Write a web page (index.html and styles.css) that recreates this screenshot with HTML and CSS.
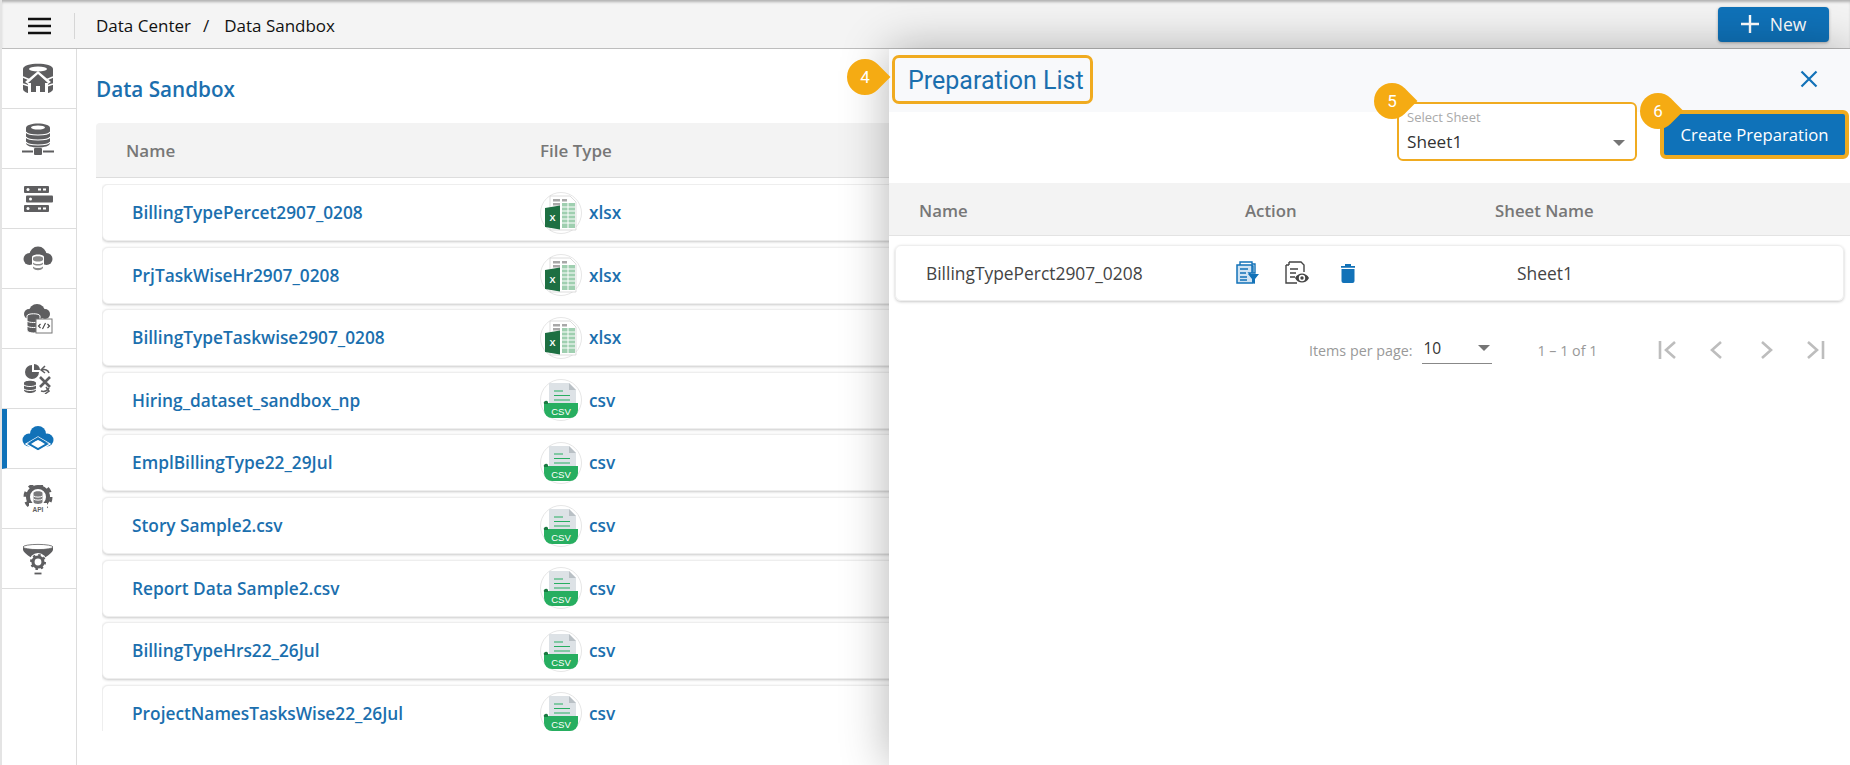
FILE: index.html
```html
<!DOCTYPE html>
<html lang="en">
<head>
<meta charset="utf-8">
<title>Data Sandbox</title>
<link rel="stylesheet" href="styles.css">
</head>
<body>
<svg class="defs" width="0" height="0" aria-hidden="true">
  <symbol id="xlsx" viewBox="0 0 42 42">
    <circle cx="21" cy="21" r="20.5" fill="#fff" stroke="#e6e6e6"/>
    <path d="M10 4h20l6 6v28H10z" fill="#fff" stroke="#cfcfcf" stroke-width=".7"/>
    <path d="M13 7h7v2.5h-7zM13 11h7v2.5h-7zM22 7h5v2.5h-5z" fill="#a8a8a8"/>
    <path d="M22 11h13v25H22z" fill="#9fcfb0"/>
    <path d="M22 15h13M22 19h13M22 23h13M22 27h13M22 31h13M28 11v25" stroke="#fff" stroke-width="1"/>
    <path d="M5 16l15-2.500v24L5 35z" fill="#1d6f42"/>
  </symbol>
  <symbol id="csv" viewBox="0 0 42 42">
    <circle cx="21" cy="21" r="20.500" fill="#fff" stroke="#e6e6e6"/>
    <path d="M9 4h20l7 7v16H9z" fill="#dde2e6"/>
    <path d="M29 4l7 7h-7z" fill="#b9c0c5"/>
    <path d="M14 12h9M14 16.500h16M14 21h16" stroke="#27ae60" stroke-width="1.200"/>
    <path d="M4 24h34v7a8 8 0 0 1-8 8H12a8 8 0 0 1-8-8z" fill="#27ae60"/>
    <path d="M4 25a2 2 0 0 1 4-2v2z" fill="#1a7a42"/>
  </symbol>
</svg>

<div class="app">
  <header class="topbar">
    <button class="menu" aria-label="Menu">
      <svg width="24" height="18" viewBox="0 0 24 18"><path d="M0 2h23M0 9h23M0 16h23" stroke="#111" stroke-width="2.400"/></svg>
    </button>
    <nav class="crumbs"><span>Data Center</span><span class="sep">/</span><span>Data Sandbox</span></nav>
    <button class="new-btn">
      <svg width="18" height="18" viewBox="0 0 18 18"><path d="M9 0v18M0 9h18" stroke="#fff" stroke-width="2.400"/></svg>
      <span>New</span>
    </button>
  </header>

  <div class="body">
    <aside class="sidebar">
      <div class="side-item">
        <svg width="32" height="32" viewBox="0 0 32 32">
          <path d="M1 6c0-7 30-7 30 0v20c0 7-30 7-30 0z" fill="#5e5e60"/>
          <ellipse cx="16" cy="6" rx="9" ry="2.400" fill="#fff"/>
          <path d="M1 14l7 3M31 14l-7 3M1 21l6 2M31 21l-6 2" stroke="#fff" stroke-width="1.400"/>
          <path d="M16 8L3 19l3 2v11h20V21l3-2z" fill="#fff"/>
          <path d="M16 11L6 20h3v9h5v-6h4v6h5v-9h3z" fill="#5e5e60"/>
        </svg>
      </div>
      <div class="side-item">
        <svg width="32" height="32" viewBox="0 0 32 32">
          <path d="M4 5c0-6 24-6 24 0v15c0 6-24 6-24 0z" fill="#5e5e60"/>
          <ellipse cx="16" cy="4.500" rx="7" ry="2" fill="#fff"/>
          <path d="M4 9c2 4 22 4 24 0M4 14c2 4 22 4 24 0M4 19c2 4 22 4 24 0" fill="none" stroke="#fff" stroke-width="1.200"/>
          <path d="M0 28.500h11M21 28.500h11" stroke="#5e5e60" stroke-width="2"/>
          <rect x="12" y="25" width="8" height="7" rx="1" fill="#5e5e60"/>
        </svg>
      </div>
      <div class="side-item">
        <svg width="30" height="28" viewBox="0 0 30 28">
          <rect x="1" y="1" width="25" height="7" rx="1" fill="#5e5e60"/>
          <rect x="3" y="10.500" width="27" height="7" rx="1" fill="#5e5e60"/>
          <rect x="1" y="20" width="25" height="7" rx="1" fill="#5e5e60"/>
          <circle cx="5" cy="4.500" r="1.500" fill="#fff"/><circle cx="7.500" cy="14" r="1.500" fill="#fff"/><circle cx="5" cy="23.500" r="1.500" fill="#fff"/>
          <path d="M15 3.500h3v2h-3zM20 3.500h3v2h-3zM15 22.500h3v2h-3zM20 22.500h3v2h-3z" fill="#fff"/>
        </svg>
      </div>
      <div class="side-item">
        <svg width="30" height="26" viewBox="0 0 30 26">
          <circle cx="15" cy="9" r="8.500" fill="#5e5e60"/>
          <circle cx="6.500" cy="13" r="6" fill="#5e5e60"/>
          <circle cx="23.500" cy="13" r="6" fill="#5e5e60"/>
          <path d="M9 11c0-3.500 12-3.500 12 0v11c0 4.500-12 4.500-12 0z" fill="#fff"/>
          <path d="M10 12c0-2.500 10-2.500 10 0v2c-2 2-8 2-10 0zM10 16.500c2 2 8 2 10 0v1.500c-2 2-8 2-10 0zM10 20.500c2 2 8 2 10 0v1.500c-2 3-8 3-10 0z" fill="#8a8a8a"/>
        </svg>
      </div>
      <div class="side-item">
        <svg width="30" height="32" viewBox="0 0 30 32">
          <circle cx="14" cy="9" r="8" fill="#5e5e60"/>
          <circle cx="6" cy="11" r="5" fill="#5e5e60"/>
          <circle cx="22" cy="11" r="5" fill="#5e5e60"/>
          <path d="M4 13c0-3 13-3 13 0v14c0 4-13 4-13 0z" fill="#5e5e60" stroke="#fff"/>
          <path d="M4 18c2 2 11 2 13 0M4 23c2 2 11 2 13 0" stroke="#fff" fill="none"/>
          <rect x="13" y="16" width="16" height="14" fill="#fff" stroke="#777" stroke-width="1"/>
          <path d="M17.500 21l-2 2 2 2M24.500 21l2 2-2 2M22.500 20l-3 6" stroke="#444" fill="none" stroke-width="1.100"/>
        </svg>
      </div>
      <div class="side-item">
        <svg width="30" height="30" viewBox="0 0 30 30">
          <path d="M9 1a7 7 0 1 0 7 7H9z" fill="#5e5e60"/>
          <path d="M11 0a6 6 0 0 1 6 6h-6z" fill="#5e5e60"/>
          <path d="M1 19c0-3 12-3 12 0v7c0 4-12 4-12 0z" fill="#5e5e60"/>
          <path d="M1 21c2 2 10 2 12 0M1 25c2 2 10 2 12 0" stroke="#fff" fill="none"/>
          <path d="M17 13l10 10M27 13L17 23" stroke="#5e5e60" stroke-width="2.600"/>
          <path d="M26 9c-1-3-4-4-7-3M22 2l-4 4 4 3M18 27c3 1 6 0 8-3M22 30l4-3-3-4" stroke="#5e5e60" fill="none" stroke-width="1.500"/>
        </svg>
      </div>
      <div class="side-item active">
        <svg width="32" height="26" viewBox="0 0 32 26">
          <circle cx="16" cy="8" r="8" fill="#1272b8"/>
          <circle cx="7" cy="14" r="6.500" fill="#1272b8"/>
          <circle cx="25" cy="14" r="6.500" fill="#1272b8"/>
          <path d="M16 11L4 18l12 7 12-7z" fill="#1272b8" stroke="#fff" stroke-width="1.300"/>
          <path d="M16 13.500L9 18l7 4 7-4z" fill="#fff"/>
          <path d="M16 11L5 17.500l11-3.500 11 3.500z" fill="#1272b8"/>
        </svg>
      </div>
      <div class="side-item">
        <svg width="32" height="28" viewBox="0 0 32 28">
          <circle cx="16" cy="12" r="10" fill="none" stroke="#5e5e60" stroke-width="4"/>
          <circle cx="16" cy="12" r="13" fill="none" stroke="#5e5e60" stroke-width="3" stroke-dasharray="5 5.200"/>
          <rect x="7" y="18" width="18" height="10" fill="#fff"/>
          <path d="M11.500 8c0-2.500 9-2.500 9 0v9c0 2.500-9 2.500-9 0z" fill="#7a7a7c"/>
          <path d="M11.500 11c2 1.500 7 1.500 9 0M11.500 14c2 1.500 7 1.500 9 0" stroke="#fff" fill="none"/>
          <text x="16" y="27" class="api">API</text>
        </svg>
      </div>
      <div class="side-item">
        <svg width="32" height="32" viewBox="0 0 32 32">
          <path d="M1 4v3c2 5 8 6 10 10h10c2-4 8-5 10-10V4z" fill="#5e5e60"/>
          <ellipse cx="16" cy="4" rx="15" ry="2.600" fill="#fff" stroke="#5e5e60" stroke-width=".8"/>
          <circle cx="16" cy="19" r="9" fill="#fff"/>
          <circle cx="16" cy="19" r="5" fill="none" stroke="#5e5e60" stroke-width="3.200"/>
          <circle cx="16" cy="19" r="7" fill="none" stroke="#5e5e60" stroke-width="2" stroke-dasharray="2.500 3"/>
          <path d="M12.500 30.500h7" stroke="#5e5e60" stroke-width="1.800"/>
        </svg>
      </div>
    </aside>

    <main class="main">
      <h1 class="page-title">Data Sandbox</h1>
      <div class="table-head"><span class="col-name">Name</span><span>File Type</span></div>
      <div class="rows">
        <div class="row"><span class="col-name">BillingTypePercet2907_0208</span><span class="type"><svg class="file" viewBox="0 0 42 42"><use href="#xlsx"/><text x="12.500" y="29" class="xl">X</text></svg>xlsx</span></div>
        <div class="row"><span class="col-name">PrjTaskWiseHr2907_0208</span><span class="type"><svg class="file" viewBox="0 0 42 42"><use href="#xlsx"/><text x="12.500" y="29" class="xl">X</text></svg>xlsx</span></div>
        <div class="row"><span class="col-name">BillingTypeTaskwise2907_0208</span><span class="type"><svg class="file" viewBox="0 0 42 42"><use href="#xlsx"/><text x="12.500" y="29" class="xl">X</text></svg>xlsx</span></div>
        <div class="row"><span class="col-name">Hiring_dataset_sandbox_np</span><span class="type"><svg class="file" viewBox="0 0 42 42"><use href="#csv"/><text x="21" y="36" class="cs">CSV</text></svg>csv</span></div>
        <div class="row"><span class="col-name">EmplBillingType22_29Jul</span><span class="type"><svg class="file" viewBox="0 0 42 42"><use href="#csv"/><text x="21" y="36" class="cs">CSV</text></svg>csv</span></div>
        <div class="row"><span class="col-name">Story Sample2.csv</span><span class="type"><svg class="file" viewBox="0 0 42 42"><use href="#csv"/><text x="21" y="36" class="cs">CSV</text></svg>csv</span></div>
        <div class="row"><span class="col-name">Report Data Sample2.csv</span><span class="type"><svg class="file" viewBox="0 0 42 42"><use href="#csv"/><text x="21" y="36" class="cs">CSV</text></svg>csv</span></div>
        <div class="row"><span class="col-name">BillingTypeHrs22_26Jul</span><span class="type"><svg class="file" viewBox="0 0 42 42"><use href="#csv"/><text x="21" y="36" class="cs">CSV</text></svg>csv</span></div>
        <div class="row"><span class="col-name">ProjectNamesTasksWise22_26Jul</span><span class="type"><svg class="file" viewBox="0 0 42 42"><use href="#csv"/><text x="21" y="36" class="cs">CSV</text></svg>csv</span></div>
      </div>
    </main>
  </div>

  <section class="drawer">
    <div class="drawer-head">
      <h2 class="drawer-title">Preparation List<span class="badge badge-4"><b>4</b></span></h2>
      <button class="close" aria-label="Close">
        <svg width="18" height="18" viewBox="0 0 18 18"><path d="M1.500 1.500l15 15M16.500 1.500l-15 15" stroke="#1272b8" stroke-width="2.200"/></svg>
      </button>
    </div>
    <div class="toolbar">
      <div class="select">
        <span class="badge badge-5"><b>5</b></span>
        <span class="select-label">Select Sheet</span>
        <span class="select-value">Sheet1<i class="caret"></i></span>
      </div>
      <button class="create">Create Preparation<span class="badge badge-6"><b>6</b></span></button>
    </div>
    <div class="d-head d-grid"><span>Name</span><span>Action</span><span>Sheet Name</span></div>
    <div class="d-row d-grid">
      <span>BillingTypePerct2907_0208</span>
      <span class="actions">
        <svg width="24" height="24" viewBox="0 0 24 24">
          <path d="M5 1h12v2h3v9h-2V5H5z" fill="#fff" stroke="#1272b8" stroke-width="1.400"/>
          <path d="M2 4h15v8h-3l4 5v5H2z" fill="#cfe3f3" stroke="#1272b8" stroke-width="1.500"/>
          <path d="M5 8h8M5 12h6M5 16h7M5 19h7" stroke="#1272b8" stroke-width="1.500"/>
          <path d="M13 13h11l-4 5v5l-3-2v-3z" fill="#1272b8"/>
        </svg>
        <svg width="26" height="24" viewBox="0 0 26 24">
          <path d="M5 1h12l3 3v7M2 4v18h11" fill="none" stroke="#444" stroke-width="1.400"/>
          <path d="M2 4h3M5 1v3" stroke="#444" stroke-width="1.400"/>
          <path d="M6 8h8M6 12h6M6 16h5" stroke="#444" stroke-width="1.500"/>
          <path d="M11 17c3-6 11-6 14 0-3 6-11 6-14 0z" fill="#444"/>
          <circle cx="18" cy="17" r="3.200" fill="#fff"/><circle cx="18" cy="17" r="1.700" fill="#444"/>
        </svg>
        <svg width="16" height="20" viewBox="0 0 16 20">
          <path d="M1 3h14v1.800H1zM5 1h6v2H5z" fill="#1272b8"/>
          <path d="M1.500 6h13v12a2 2 0 0 1-2 2h-9a2 2 0 0 1-2-2z" fill="#1272b8"/>
        </svg>
      </span>
      <span class="d-sheet">Sheet1</span>
    </div>
    <div class="pager">
      <span class="pager-label">Items per page:</span>
      <span class="pager-size">10<i class="caret dark"></i></span>
      <span class="pager-range">1 – 1 of 1</span>
      <span class="pager-btns">
        <svg width="20" height="20" viewBox="0 0 20 20"><path d="M2 1v18M17 2L8 10l9 8" fill="none" stroke="#bdbdbd" stroke-width="2.600"/></svg>
        <svg width="20" height="20" viewBox="0 0 20 20"><path d="M14 2L5 10l9 8" fill="none" stroke="#bdbdbd" stroke-width="2.600"/></svg>
        <svg width="20" height="20" viewBox="0 0 20 20"><path d="M6 2l9 8-9 8" fill="none" stroke="#bdbdbd" stroke-width="2.600"/></svg>
        <svg width="20" height="20" viewBox="0 0 20 20"><path d="M18 1v18M3 2l9 8-9 8" fill="none" stroke="#bdbdbd" stroke-width="2.600"/></svg>
      </span>
    </div>
  </section>
</div>
</body>
</html>
```

FILE: styles.css
```css
* { box-sizing: border-box; }
html, body { margin: 0; height: 100%; overflow: hidden; background: #fff; }
body { font-family: "Open Sans", "Noto Sans", sans-serif; color: #222; }
button { font: inherit; border: 0; background: none; padding: 0; cursor: pointer; }
.defs { position: absolute; }
.xl { font: 700 9px "Liberation Sans", sans-serif; fill: #fff; text-anchor: middle; }
.cs { font: 400 9.500px "Liberation Sans", sans-serif; fill: #fff; text-anchor: middle; }
.api { font: 700 6.500px "Liberation Sans", sans-serif; fill: #5e5e60; text-anchor: middle; }

.app { position: relative; width: 1850px; height: 765px; overflow: hidden; border-left: 2px solid #e4e4e4; display: flex; flex-direction: column; }

.topbar { flex: 0 0 49px; display: flex; align-items: center; background: #f4f4f4; border-bottom: 1px solid #bdbdbd; box-shadow: inset 0 3px 3px -1px rgba(0,0,0,.28); padding-right: 21px; }
.menu { width: 73px; height: 26px; border-right: 1px solid #d6d6d6; display: flex; align-items: center; padding-left: 26px; margin-top: 3px; }
.crumbs { margin-left: 21px; font-size: 17px; color: #111; display: flex; gap: 12px; margin-top: 2px; }
.sep { margin-right: 3px; }
.new-btn { margin-left: auto; width: 111px; height: 35px; background: #0f72b9; color: #fff; border-radius: 4px; font-size: 17.500px; display: flex; align-items: center; justify-content: center; gap: 11px; box-shadow: 0 1px 3px rgba(0,0,0,.3); }

.body { flex: 1; display: flex; min-height: 0; }
.sidebar { flex: 0 0 75px; border-right: 1px solid #ddd; }
.side-item { height: 60px; border-bottom: 1px solid #ddd; display: flex; align-items: center; justify-content: center; padding-right: 2px; }
.side-item.active { border-left: 5px solid #0f72b9; padding-right: 7px; }

.main { flex: 1; min-width: 0; padding: 0 0 0 19px; }
.page-title { margin: 27px 0 0; height: 47px; font-size: 20.700px; font-weight: 600; line-height: 27px; color: #1b6fae; }
.table-head { height: 55px; background: #f3f3f3; border-bottom: 1px solid #ddd; border-radius: 4px 4px 0 0; display: flex; align-items: center; font-size: 17px; font-weight: 600; color: #777; }
.table-head .col-name { padding-left: 30px; width: 444px; }
.rows { margin-top: 6px; margin-left: 6px; height: 547px; overflow: hidden; display: flex; flex-direction: column; gap: 5.620px; }
.row { flex: 0 0 57px; display: flex; align-items: center; background: #fff; border: 1px solid #eee; border-radius: 6px; box-shadow: 0 1px 3px rgba(0,0,0,.22); color: #1b6fae; font-size: 17.300px; font-weight: 600; }
.row .col-name { padding-left: 29px; width: 437px; }
.type { display: flex; align-items: center; gap: 7px; }
.file { width: 42px; height: 42px; }

.drawer { position: absolute; left: 887px; top: 49px; right: 0; bottom: 0; background: #fff; box-shadow: 0 0 45px rgba(0,0,0,.3); display: flex; flex-direction: column; font-size: 17.400px; }
.drawer-head { height: 63px; flex: none; background: #f8f9fb; display: flex; align-items: flex-start; justify-content: space-between; padding: 6px 32px 0 3px; }
.drawer-title { position: relative; margin: 0; width: 201px; height: 49px; border: 3.500px solid #f0ab20; border-radius: 7px; padding-left: 13px; font: 400 25px/45px "Roboto", sans-serif; color: #1b6fae; white-space: nowrap; }
.close { margin-top: 15px; line-height: 0; }

.toolbar { flex: none; height: 81px; margin-top: -10px; display: flex; align-items: flex-start; justify-content: flex-end; padding-right: 1px; gap: 23px; }
.select { position: relative; width: 240px; height: 59px; border: 2px solid #f0ab20; border-radius: 6px; background: #fff; padding: 6px 0 0 8px; display: flex; flex-direction: column; }
.select-label { font-size: 13px; line-height: 15px; color: #aaa; }
.select-value { position: relative; font-size: 17.200px; line-height: 24px; margin-top: 5px; color: #333; }
.caret { position: absolute; right: 10px; top: 10px; border-left: 6px solid transparent; border-right: 6px solid transparent; border-top: 6px solid #757575; }
.caret.dark { right: 2px; top: 9px; }
.create { position: relative; margin-top: 8px; width: 189px; height: 49px; background: #0f72b9; border: 4px solid #f0ab20; border-radius: 6px; color: #fff; font-size: 16.700px; white-space: nowrap; }

.badge { position: absolute; width: 36px; height: 36px; display: flex; align-items: center; justify-content: center; color: #fff; font: 400 17px "Roboto", sans-serif; }
.badge::before { content: ""; position: absolute; inset: 0; background: #f5ab13; border-radius: 50% 0 50% 50%; transform: rotate(45deg); }
.badge b { position: relative; font-weight: 400; }
.badge-4 { left: -48px; top: 1px; }
.badge-5 { left: -25px; top: -21px; }
.badge-6 { left: -24px; top: -21px; }

.d-grid { display: grid; grid-template-columns: 325px 251px 1fr; align-items: center; }
.d-head { flex: none; height: 53px; background: #f3f3f3; border-bottom: 1px solid #e3e3e3; padding: 2px 0 0 30px; font-size: 16.800px; font-weight: 600; color: #777; }
.d-head span:nth-child(2) { margin-left: 1px; }
.d-row { flex: none; height: 56px; margin: 9px 6px 0 6px; padding-left: 30px; grid-template-columns: 320px 245px 1fr; border: 1px solid #eee; border-radius: 6px; box-shadow: 0 1px 3px rgba(0,0,0,.22); color: #444; }
.actions { display: flex; align-items: center; gap: 25px; margin-left: -11px; }
.actions svg:last-child { margin-left: 5px; }
.d-sheet { margin-left: 26px; }

.pager { flex: none; display: flex; align-items: center; height: 40px; margin-top: 29px; padding-left: 420px; font-size: 14.300px; color: #999; }
.pager-size { position: relative; width: 70px; height: 28px; margin-left: 10px; border-bottom: 1px solid #888; color: #333; font-size: 15.500px; line-height: 24px; padding-left: 1px; }
.pager-range { margin-left: 45px; width: 90px; }
.pager-btns { display: flex; gap: 29px; margin-left: 31px; line-height: 0; }
```
